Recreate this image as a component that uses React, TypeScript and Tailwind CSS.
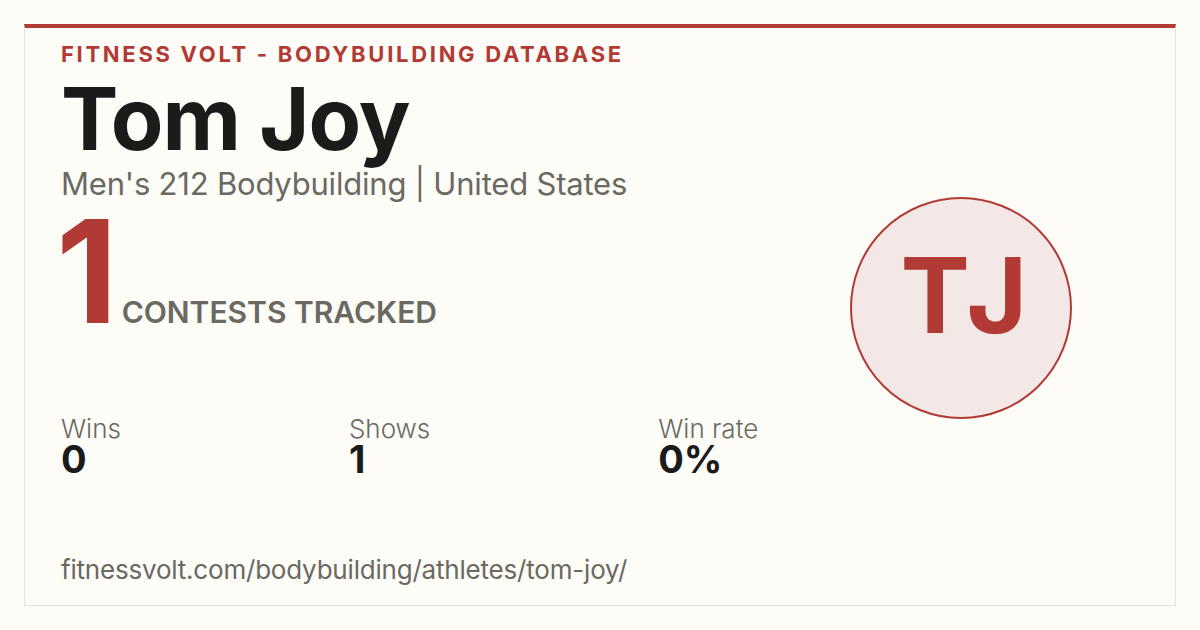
const stats = [
  { label: "Wins", value: "0" },
  { label: "Shows", value: "1" },
  { label: "Win rate", value: "0%" },
];

export default function App() {
  return (
    <div
      className="w-[1200px] h-[630px] bg-[#fdfcf7] p-6"
      style={{ fontFamily: "Inter, 'Noto Sans', sans-serif" }}
    >
      <div className="h-full flex border border-[#e3e0d8] border-t-4 border-t-[#b23a35]">
        {/* Left content */}
        <div className="flex-1 flex flex-col pl-9 pt-3">
          <div className="text-[22px] leading-[28px] font-bold tracking-[2.7px] text-[#b23a35]">
            FITNESS VOLT - BODYBUILDING DATABASE
          </div>
          <h1 className="mt-2 text-[86px] leading-[86px] font-bold tracking-[-1px] text-[#1b1b1b]">
            Tom Joy
          </h1>
          <div className="mt-1 text-[31px] leading-[36px] tracking-[-0.2px] text-[#6a6963]">
            Men's 212 Bodybuilding | United States
          </div>
          <div className="mt-[9px] flex items-baseline">
            <span className="-ml-[5px] text-[143px] leading-[120px] font-bold text-[#b23a35]">1</span>
            <span className="ml-[4px] text-[30px] font-semibold text-[#6a6963]">
              CONTESTS TRACKED
            </span>
          </div>
          <div className="mt-[81px] flex gap-[228px]">
            {stats.map((s) => (
              <div key={s.label} className="flex flex-col">
                <span className="text-[26px] leading-[26px] font-light text-[#6a6963]">{s.label}</span>
                <span className="text-[38px] leading-[34px] font-bold text-[#1b1b1b]">{s.value}</span>
              </div>
            ))}
          </div>
          <div className="mt-[79px] text-[26px] leading-[30px] tracking-[-0.2px] text-[#6a6963]">
            fitnessvolt.com/bodybuilding/athletes/tom-joy/
          </div>
        </div>

        {/* Initials badge */}
        <div className="mt-[169px] mr-[103px] self-start">
          <div className="w-[222px] h-[222px] rounded-full border-2 border-[#b23a35] bg-[#f4e8e7] flex items-center justify-center pb-[26px] pl-[12px]">
            <span className="text-[104px] leading-none font-bold tracking-[6px] text-[#b23a35]">TJ</span>
          </div>
        </div>
      </div>
    </div>
  );
}
